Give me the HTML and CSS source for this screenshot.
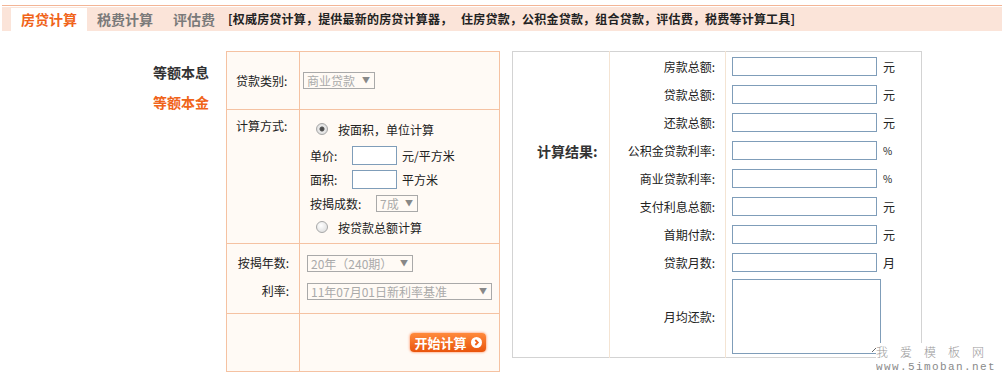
FILE: index.html
```html
<!DOCTYPE html>
<html lang="zh-CN">
<head>
    <meta charset="UTF-8">
    <title>房贷计算器</title>
    <link rel="stylesheet" href="styles.css">
</head>
<body>
    <div class="topbar">
        <ul class="tabs">
            <li class="tab active">房贷计算</li>
            <li class="tab">税费计算</li>
            <li class="tab">评估费</li>
            <li class="intro">[权威房贷计算，提供最新的房贷计算器，&nbsp;&nbsp; 住房贷款，公积金贷款，组合贷款，评估费，税费等计算工具]</li>
        </ul>
    </div>

    <div class="main">
        <ul class="side">
            <li class="side-item">等额本息</li>
            <li class="side-item active">等额本金</li>
        </ul>

        <table class="loan-form">
            <colgroup>
                <col class="c1">
                <col class="c2">
            </colgroup>
            <tr class="r1">
                <td class="lbl">贷款类别:</td>
                <td class="first-val">
                    <span class="sel w72">
                        <select disabled><option>商业贷款</option></select>
                        <span class="arrow">▼</span>
                    </span>
                </td>
            </tr>
            <tr class="r2">
                <td class="lbl top">计算方式:</td>
                <td class="method">
                    <div class="radio-line first">
                        <input type="radio" name="way" checked>
                        <span>按面积，单位计算</span>
                    </div>
                    <div class="field-line">
                        <span class="f-label">单价:</span>
                        <input type="text" class="small-input">
                        <span class="unit">元/平方米</span>
                    </div>
                    <div class="field-line">
                        <span class="f-label">面积:</span>
                        <input type="text" class="small-input">
                        <span class="unit">平方米</span>
                    </div>
                    <div class="field-line">
                        <span class="f-label wide">按揭成数:</span>
                        <span class="sel w42">
                            <select disabled><option>7成</option></select>
                            <span class="arrow">▼</span>
                        </span>
                    </div>
                    <div class="radio-line">
                        <input type="radio" name="way">
                        <span>按贷款总额计算</span>
                    </div>
                </td>
            </tr>
            <tr class="r3">
                <td class="lbl right">
                    <div class="row-line">按揭年数:</div>
                    <div class="row-line">利率:</div>
                </td>
                <td class="years">
                    <div class="row-line">
                        <span class="sel w106">
                            <select disabled><option>20年（240期）</option></select>
                            <span class="arrow">▼</span>
                        </span>
                    </div>
                    <div class="row-line">
                        <span class="sel w185">
                            <select disabled><option>11年07月01日新利率基准</option></select>
                            <span class="arrow">▼</span>
                        </span>
                    </div>
                </td>
            </tr>
            <tr class="r4">
                <td></td>
                <td class="btn-cell">
                    <button class="calc-btn">开始计算 <span class="go"><svg width="11" height="11" viewBox="0 0 11 11"><circle cx="5.5" cy="5.5" r="5.5" fill="#fff"/><path d="M4.3 3 L6.8 5.5 L4.3 8" fill="none" stroke="#f06018" stroke-width="1.8"/></svg></span></button>
                </td>
            </tr>
        </table>

        <table class="result">
            <colgroup>
                <col class="rc1">
                <col class="rc2">
                <col class="rc3">
            </colgroup>
            <tr>
                <td class="result-title" rowspan="9">计算结果:</td>
                <td class="r-label">房款总额:</td>
                <td class="r-val"><input type="text" class="r-input"><span class="r-unit">元</span></td>
            </tr>
            <tr>
                <td class="r-label">贷款总额:</td>
                <td class="r-val"><input type="text" class="r-input"><span class="r-unit">元</span></td>
            </tr>
            <tr>
                <td class="r-label">还款总额:</td>
                <td class="r-val"><input type="text" class="r-input"><span class="r-unit">元</span></td>
            </tr>
            <tr>
                <td class="r-label">公积金贷款利率:</td>
                <td class="r-val"><input type="text" class="r-input"><span class="r-unit pct">%</span></td>
            </tr>
            <tr>
                <td class="r-label">商业贷款利率:</td>
                <td class="r-val"><input type="text" class="r-input"><span class="r-unit pct">%</span></td>
            </tr>
            <tr>
                <td class="r-label">支付利息总额:</td>
                <td class="r-val"><input type="text" class="r-input"><span class="r-unit">元</span></td>
            </tr>
            <tr>
                <td class="r-label">首期付款:</td>
                <td class="r-val"><input type="text" class="r-input"><span class="r-unit">元</span></td>
            </tr>
            <tr>
                <td class="r-label">贷款月数:</td>
                <td class="r-val"><input type="text" class="r-input"><span class="r-unit">月</span></td>
            </tr>
            <tr class="last-row">
                <td class="r-label">月均还款:</td>
                <td class="r-val"><textarea class="r-area"></textarea></td>
            </tr>
        </table>
    </div>

    <div class="watermark">
        <div class="wm-cn">我爱模板网</div>
        <div class="wm-en">www.5imoban.net</div>
    </div>
</body>
</html>
```

FILE: styles.css
```css
body {
    margin: 0;
    font-family: "Noto Sans CJK SC", "Liberation Sans", sans-serif;
    font-size: 12px;
    color: #222;
    background: #fff;
}

ul {
    margin: 0;
    padding: 0;
    list-style: none;
}

/* Top tabs */
.topbar {
    margin: 5px 0 0 2px;
    border-top: 1px solid #f3b596;
    padding-top: 1px;
}

.tabs {
    display: flex;
    align-items: flex-end;
    height: 24px;
    padding-left: 9px;
    background: #fbe4d9;
}

.tab {
    height: 23px;
    line-height: 23px;
    padding: 0 10px;
    font-size: 14px;
    font-weight: bold;
    color: #7a7a7a;
}

.tab.active {
    background: #fff;
    color: #f0641a;
}

.intro {
    align-self: center;
    margin-left: 3px;
    line-height: 24px;
    font-weight: bold;
    letter-spacing: 0.2px;
    color: #222;
    white-space: nowrap;
}

/* Main area */
.main {
    display: flex;
    align-items: flex-start;
    margin-top: 20px;
}

.side {
    width: 226px;
    box-sizing: border-box;
    padding: 6px 17px 0 0;
    text-align: right;
}

.side-item {
    line-height: 30px;
    font-size: 14px;
    font-weight: bold;
    color: #333;
}

.side-item.active {
    color: #f0641a;
}

/* Left form */
.loan-form {
    width: 274px;
    table-layout: fixed;
    border-collapse: collapse;
    background: #fffaf5;
}

.loan-form col.c1 {
    width: 73px;
}

.loan-form td {
    border: 1px solid #f5c2a2;
    padding: 0;
}

.loan-form .r1 {
    height: 58px;
}

.loan-form .r2 {
    height: 134px;
}

.loan-form .r3 {
    height: 70px;
}

.loan-form .r4 {
    height: 58px;
}

.loan-form .lbl {
    padding-left: 9px;
    line-height: 16px;
}

.loan-form .lbl.top {
    vertical-align: top;
    padding-top: 8px;
}

.loan-form .lbl.right {
    vertical-align: top;
    padding: 5px 10px 0 0;
}

.loan-form .first-val {
    padding-left: 3px;
}

.loan-form .method {
    vertical-align: top;
    padding: 8px 0 0 10px;
}

.radio-line {
    display: flex;
    align-items: center;
    height: 24px;
}

.radio-line.first {
    height: 22px;
    margin-bottom: 3px;
}

.radio-line input {
    appearance: none;
    width: 12px;
    height: 12px;
    margin: 0 10px 0 6px;
    border: 1px solid #a8a8a8;
    border-radius: 50%;
    background: radial-gradient(circle at 40% 35%, #fff, #d8d8d8);
    box-sizing: border-box;
}

.radio-line input:checked {
    background: radial-gradient(circle, #444 0, #555 2px, #ececec 3px, #d8d8d8 6px);
}

.field-line {
    display: flex;
    align-items: center;
    height: 24px;
}

.f-label {
    width: 42px;
}

.f-label.wide {
    width: 66px;
}

.small-input {
    width: 45px;
    height: 19px;
    box-sizing: border-box;
    border: 1px solid #7f9db9;
    padding: 0;
    background: #fff;
}

.unit {
    margin-left: 5px;
}

.loan-form .years {
    vertical-align: top;
    padding: 5px 0 0 7px;
}

.row-line {
    display: flex;
    align-items: center;
    height: 28px;
}

.lbl.right .row-line {
    justify-content: flex-end;
}

/* Fake grey select boxes */
.sel {
    position: relative;
    display: inline-block;
    height: 17px;
}

.sel select {
    appearance: none;
    width: 100%;
    height: 17px;
    margin: 0;
    padding: 0 0 0 3px;
    border: 1px solid #a9a9a9;
    border-radius: 0;
    background: transparent;
    color: #aaa;
    font-family: inherit;
    font-size: 12px;
    line-height: 15px;
    opacity: 1;
}

.sel .arrow {
    position: absolute;
    right: 5px;
    top: 3px;
    font-size: 8px;
    line-height: 10px;
    color: #888;
}

.w72 {
    width: 72px;
}

.w42 {
    width: 42px;
}

.w106 {
    width: 106px;
}

.w185 {
    width: 185px;
}

.loan-form .btn-cell {
    text-align: right;
    padding-right: 13px;
    vertical-align: middle;
}

.calc-btn {
    display: inline-flex;
    align-items: center;
    justify-content: center;
    gap: 4px;
    width: 76px;
    height: 19px;
    padding: 0;
    border: none;
    border-radius: 4px;
    background: linear-gradient(to bottom, #ff8a3c, #e9540c);
    box-shadow: 0 0 2px 1px rgba(255, 120, 60, 0.45);
    color: #fff;
    font-family: inherit;
    font-size: 13px;
    font-weight: bold;
    line-height: 19px;
}

.go svg {
    display: block;
}

/* Result table */
.result {
    width: 410px;
    margin-left: 12px;
    table-layout: fixed;
    border-collapse: collapse;
    border: 1px solid #d3d3d3;
}

.result col.rc1 {
    width: 97px;
}

.result col.rc2 {
    width: 116px;
}

.result td {
    padding: 0;
    height: 28px;
}

.result .result-title {
    vertical-align: top;
    padding: 90px 0 0 24px;
    font-size: 14px;
    font-weight: bold;
    line-height: 18px;
    color: #333;
}

.result .r-label {
    border-left: 1px solid #f4e4d3;
    border-right: 1px solid #f4e4d3;
    text-align: right;
    padding-right: 10px;
}

.result .r-val {
    padding-left: 6px;
}

.r-input {
    width: 145px;
    height: 19px;
    box-sizing: border-box;
    border: 1px solid #7f9db9;
    padding: 0;
    vertical-align: middle;
}

.r-unit {
    margin-left: 6px;
    vertical-align: middle;
}

.r-unit.pct {
    font-size: 10px;
}

.result .last-row td {
    height: 81px;
}

.r-area {
    display: block;
    width: 149px;
    height: 75px;
    box-sizing: border-box;
    border: 1px solid #7f9db9;
    padding: 0;
    margin: 0;
}

/* Site watermark */
.watermark {
    position: fixed;
    right: 4px;
    bottom: 1px;
    width: 122px;
    background: #fff;
    color: #999;
}

.wm-cn {
    font-size: 12px;
    line-height: 18px;
    letter-spacing: 12px;
    font-weight: 300;
}

.wm-en {
    font-family: "Liberation Mono", monospace;
    font-size: 11px;
    line-height: 12px;
    letter-spacing: 1.4px;
    color: #8a8a8a;
}
```
